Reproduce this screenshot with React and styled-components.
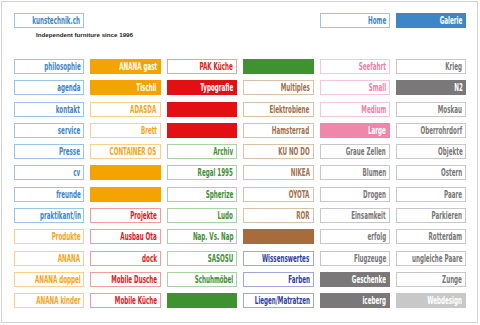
import React from "react";
import styled, { createGlobalStyle } from "styled-components";

const GlobalStyle = createGlobalStyle`
  body {
    margin: 0;
    background: #fff;
    font-family: "Liberation Sans", Arial, sans-serif;
  }
`;

const tones = {
  blue: { fill: "#3d87c9", line: "#9ec3e6", text: "#3c86c6" },
  orange: { fill: "#f5a300", line: "#fbd08a", text: "#f5a41c" },
  red: { fill: "#e30f12", line: "#f29c9c", text: "#e2171b" },
  green: { fill: "#3e9230", line: "#a8d49f", text: "#3f8f35" },
  brown: { fill: "#a86b3b", line: "#dcc0a8", text: "#a0704c" },
  navy: { fill: "#303f9a", line: "#a0a8d8", text: "#2f3f9a" },
  pink: { fill: "#ee87a9", line: "#f7c6d5", text: "#ee7fa3" },
  gray: { fill: "#7b7879", line: "#c8c8c8", text: "#777" },
  light: { fill: "#c8c8c8", line: "#c8c8c8", text: "#aaa" },
};

const Frame = styled.div`
  box-sizing: border-box;
  width: 477px;
  height: 322px;
  margin: 1px 0 0 1px;
  border: 1px solid #d2d2d2;
  padding: 11px 0 0 12px;
`;

const Columns = styled.div`
  display: grid;
  grid-template-columns: repeat(6, 70.4px);
  column-gap: 6px;
`;

const Header = styled(Columns)`
  grid-template-rows: 15px;
`;

const Tagline = styled.div`
  margin: 2px 0 0 22px;
  font-size: 6.2px;
  line-height: 9px;
  font-weight: bold;
  color: #1a1a1a;
`;

const Board = styled(Columns)`
  margin-top: 20px;
  grid-template-rows: repeat(12, 15px);
  grid-auto-flow: column;
  row-gap: 6.3px;
`;

const Tile = styled.a`
  box-sizing: border-box;
  display: flex;
  align-items: center;
  justify-content: flex-end;
  height: 15px;
  padding-right: 3px;
  overflow: hidden;
  grid-column: ${(p) => p.$col || "auto"};
  border: 1px solid ${(p) => (p.$filled ? tones[p.$tone].fill : tones[p.$tone].line)};
  background: ${(p) => (p.$filled ? tones[p.$tone].fill : "#fff")};
  color: ${(p) => (p.$filled ? "#fff" : tones[p.$tone].text)};
  text-decoration: none;
  cursor: pointer;
`;

const Label = styled.span`
  display: inline-block;
  white-space: nowrap;
  font-family: "DejaVu Sans Condensed", "DejaVu Sans", sans-serif;
  font-stretch: condensed;
  font-weight: bold;
  font-size: 10px;
  line-height: 13px;
  transform: scaleX(0.62);
  transform-origin: right center;
`;

const columns = [
  [
    ["philosophie", "blue"], ["agenda", "blue"], ["kontakt", "blue"], ["service", "blue"],
    ["Presse", "blue"], ["cv", "blue"], ["freunde", "blue"], ["praktikant/in", "blue"],
    ["Produkte", "orange"], ["ANANA", "orange"], ["ANANA doppel", "orange"], ["ANANA kinder", "orange"],
  ],
  [
    ["ANANA gast", "orange", true], ["Tischli", "orange", true], ["ADASDA", "orange"], ["Brett", "orange"],
    ["CONTAINER OS", "orange"], ["", "orange", true], ["", "orange", true], ["Projekte", "red"],
    ["Ausbau Ota", "red"], ["dock", "red"], ["Mobile Dusche", "red"], ["Mobile Küche", "red"],
  ],
  [
    ["PAK Küche", "red"], ["Typografie", "red", true], ["", "red", true], ["", "red", true],
    ["Archiv", "green"], ["Regal 1995", "green"], ["Spherize", "green"], ["Ludo", "green"],
    ["Nap. Vs. Nap", "green"], ["SASOSU", "green"], ["Schuhmöbel", "green"], ["", "green", true],
  ],
  [
    ["", "green", true], ["Multiples", "brown"], ["Elektrobiene", "brown"], ["Hamsterrad", "brown"],
    ["KU NO DO", "brown"], ["NIKEA", "brown"], ["OYOTA", "brown"], ["ROR", "brown"],
    ["", "brown", true], ["Wissenswertes", "navy"], ["Farben", "navy"], ["Liegen/Matratzen", "navy"],
  ],
  [
    ["Seefahrt", "pink"], ["Small", "pink"], ["Medium", "pink"], ["Large", "pink", true],
    ["Graue Zellen", "gray"], ["Blumen", "gray"], ["Drogen", "gray"], ["Einsamkeit", "gray"],
    ["erfolg", "gray"], ["Flugzeuge", "gray"], ["Geschenke", "gray", true], ["iceberg", "gray", true],
  ],
  [
    ["Krieg", "gray"], ["N2", "gray", true], ["Moskau", "gray"], ["Oberrohrdorf", "gray"],
    ["Objekte", "gray"], ["Ostern", "gray"], ["Paare", "gray"], ["Parkieren", "gray"],
    ["Rotterdam", "gray"], ["ungleiche Paare", "gray"], ["Zunge", "gray"], ["Webdesign", "light", true],
  ],
];

export default function App() {
  return (
    <>
      <GlobalStyle />
      <Frame>
        <Header>
          <Tile $tone="blue" $col="1"><Label>kunstechnik.ch</Label></Tile>
          <Tile $tone="blue" $col="5"><Label>Home</Label></Tile>
          <Tile $tone="blue" $col="6" $filled><Label>Galerie</Label></Tile>
        </Header>
        <Tagline>Independent furniture since 1996</Tagline>
        <Board>
          {columns.flat().map(([text, tone, filled], i) => (
            <Tile key={i} $tone={tone} $filled={filled}>
              <Label>{text}</Label>
            </Tile>
          ))}
        </Board>
      </Frame>
    </>
  );
}
